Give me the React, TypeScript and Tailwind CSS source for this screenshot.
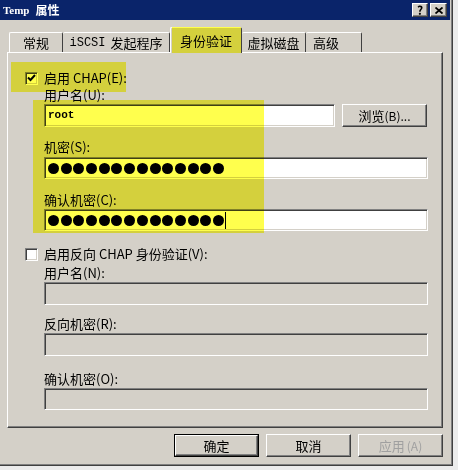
import React from "react";

const font = "font-['Noto_Sans_CJK_SC',sans-serif]";
const sunken =
  "border border-t-[#808080] border-l-[#808080] border-r-white border-b-white shadow-[inset_1px_1px_0_#404040,inset_-1px_-1px_0_#d4d0c8]";
const raised =
  "border border-t-white border-l-white border-r-[#404040] border-b-[#404040] shadow-[inset_-1px_-1px_0_#808080,inset_1px_1px_0_#d4d0c8]";

function Label({ children, className = "" }: { children: React.ReactNode; className?: string }) {
  return <div className={`h-[14px] leading-[14px] text-[13px] text-black ${className}`}>{children}</div>;
}

function Dots() {
  return (
    <div className="flex items-center gap-[1.7px] pl-[3px]">
      {Array.from({ length: 14 }).map((_, i) => (
        <div key={i} className="w-[11px] h-[11px] rounded-full bg-black" />
      ))}
    </div>
  );
}

function Checkbox({ checked }: { checked?: boolean }) {
  return (
    <div className={`w-[13px] h-[13px] bg-white flex items-center justify-center ${sunken}`}>
      {checked && (
        <svg width="9" height="8" viewBox="0 0 9 8">
          <path d="M1 3.5 L3.5 6 L8 1" stroke="black" strokeWidth="2" fill="none" />
        </svg>
      )}
    </div>
  );
}

function Button({ children, disabled, primary }: { children: React.ReactNode; disabled?: boolean; primary?: boolean }) {
  const inner = (
    <div
      className={`h-full w-full flex items-center justify-center text-[13px] ${raised} ${
        disabled ? "text-[#a0a0a0]" : "text-black"
      }`}
    >
      {children}
    </div>
  );
  return primary ? (
    <div className="w-[85px] h-[23px] border border-black">{inner}</div>
  ) : (
    <div className="w-[85px] h-[23px]">{inner}</div>
  );
}

export default function App() {
  return (
    <div className={`w-[458px] h-[470px] bg-[#ececec] ${font}`}>
      <div className="relative w-[453px] h-[466px] bg-[#d4d0c8] border-r border-b border-[#404040] shadow-[inset_-1px_-1px_0_#808080]">
        {/* Title bar */}
        <div className="h-[20px] mr-[2px] bg-[#0a246a] flex items-center justify-between pl-[3px] pr-[3px]">
          <div className="text-white font-bold text-[12px] leading-none flex items-center gap-[6px]">
            <span className="font-['Liberation_Serif',serif] text-[11px]">Temp</span>
            <span>属性</span>
          </div>
          <div className="flex gap-[2px]">
            <div className={`w-[16px] h-[14px] bg-[#d4d0c8] flex items-center justify-center text-[12px] font-bold leading-none ${raised}`}>
              ?
            </div>
            <div className={`w-[17px] h-[14px] bg-[#d4d0c8] flex items-center justify-center ${raised}`}>
              <svg width="8" height="7" viewBox="0 0 8 7">
                <path d="M0.5 0.5 L7.5 6.5 M7.5 0.5 L0.5 6.5" stroke="black" strokeWidth="1.8" />
              </svg>
            </div>
          </div>
        </div>

        {/* Tabs */}
        <div className="mt-[7px] pl-[9px] flex items-end h-[25px] relative z-10">
          <div className="w-[54px] h-[20px] border-t border-l border-white border-r border-r-[#404040] rounded-t-[2px] flex items-center justify-center text-[13px]">
            常规
          </div>
          <div className="w-[107px] h-[20px] border-t border-white border-r border-r-[#404040] rounded-t-[2px] flex items-center justify-center text-[13px]">
            <span className="font-['Liberation_Mono',monospace] text-[12px] mr-[5px]">iSCSI</span>发起程序
          </div>
          <div className="w-[72px] h-[26px] -mb-[1px] bg-[#d4d0c8] border-t border-l border-white border-r border-r-[#404040] rounded-t-[2px] flex items-start pt-[3px] justify-center text-[13px]">
            身份验证
          </div>
          <div className="w-[64px] h-[20px] border-t border-white border-r border-r-[#404040] rounded-t-[2px] flex items-center justify-center text-[13px]">
            虚拟磁盘
          </div>
          <div className="w-[56px] h-[20px] border-t border-white border-r border-r-[#404040] rounded-t-[2px] flex items-center pl-[7px] text-[13px]">
            高级
          </div>
        </div>

        {/* Panel */}
        <div className="ml-[7px] w-[436px] h-[376px] border-t border-l border-white border-r border-b border-r-[#404040] border-b-[#404040] shadow-[inset_-1px_-1px_0_#808080] pl-[17px] pt-[18px]">
          <div className="flex items-center gap-[6px]">
            <Checkbox checked />
            <Label>启用 CHAP(E):</Label>
          </div>
          <div className="pl-[19px]">
            <Label className="mt-[3px]">用户名(U):</Label>
            <div className="mt-[2px] flex gap-[7px]">
              <div className={`w-[291px] h-[23px] bg-white flex items-center pl-[3px] ${sunken}`}>
                <span className="font-['Liberation_Mono',monospace] text-[11px] font-bold">root</span>
              </div>
              <div className="bg-[#d4d0c8]">
                <Button>
                  浏览<span className="text-[12px]">(B)...</span>
                </Button>
              </div>
            </div>
            <Label className="mt-[13px]">机密(S):</Label>
            <div className={`mt-[3px] w-[384px] h-[22px] bg-white flex items-center ${sunken}`}>
              <Dots />
            </div>
            <Label className="mt-[14px]">确认机密(C):</Label>
            <div className={`mt-[2px] w-[384px] h-[22px] bg-white flex items-center ${sunken}`}>
              <Dots />
              <div className="w-[1px] h-[17px] bg-black ml-[1px]" />
            </div>
          </div>

          <div className="mt-[16px] flex items-center gap-[6px]">
            <Checkbox />
            <Label>启用反向 CHAP 身份验证(V):</Label>
          </div>
          <div className="pl-[19px]">
            <Label className="mt-[5px]">用户名(N):</Label>
            <div className={`mt-[2px] w-[384px] h-[23px] bg-[#d4d0c8] ${sunken}`} />
            <Label className="mt-[12px]">反向机密(R):</Label>
            <div className={`mt-[2px] w-[384px] h-[23px] bg-[#d4d0c8] ${sunken}`} />
            <Label className="mt-[16px]">确认机密(O):</Label>
            <div className={`mt-[2px] w-[384px] h-[22px] bg-[#d4d0c8] ${sunken}`} />
          </div>
        </div>

        {/* Bottom buttons */}
        <div className="mt-[6px] pl-[174px] flex gap-[7px]">
          <Button primary>确定</Button>
          <Button>取消</Button>
          <Button disabled>
            应用<span className="text-[12px] ml-[2px]">(A)</span>
          </Button>
        </div>

        {/* Yellow highlights */}
        <div className="absolute left-[172px] top-[27px] w-[69px] h-[26px] bg-[#ffff4d] mix-blend-multiply pointer-events-none z-20" />
        <div className="absolute left-[11px] top-[62px] w-[115px] h-[30px] bg-[#ffff4d] mix-blend-multiply pointer-events-none z-20" />
        <div className="absolute left-[33px] top-[100px] w-[231px] h-[133px] bg-[#ffff4d] mix-blend-multiply pointer-events-none z-20" />
      </div>
    </div>
  );
}
